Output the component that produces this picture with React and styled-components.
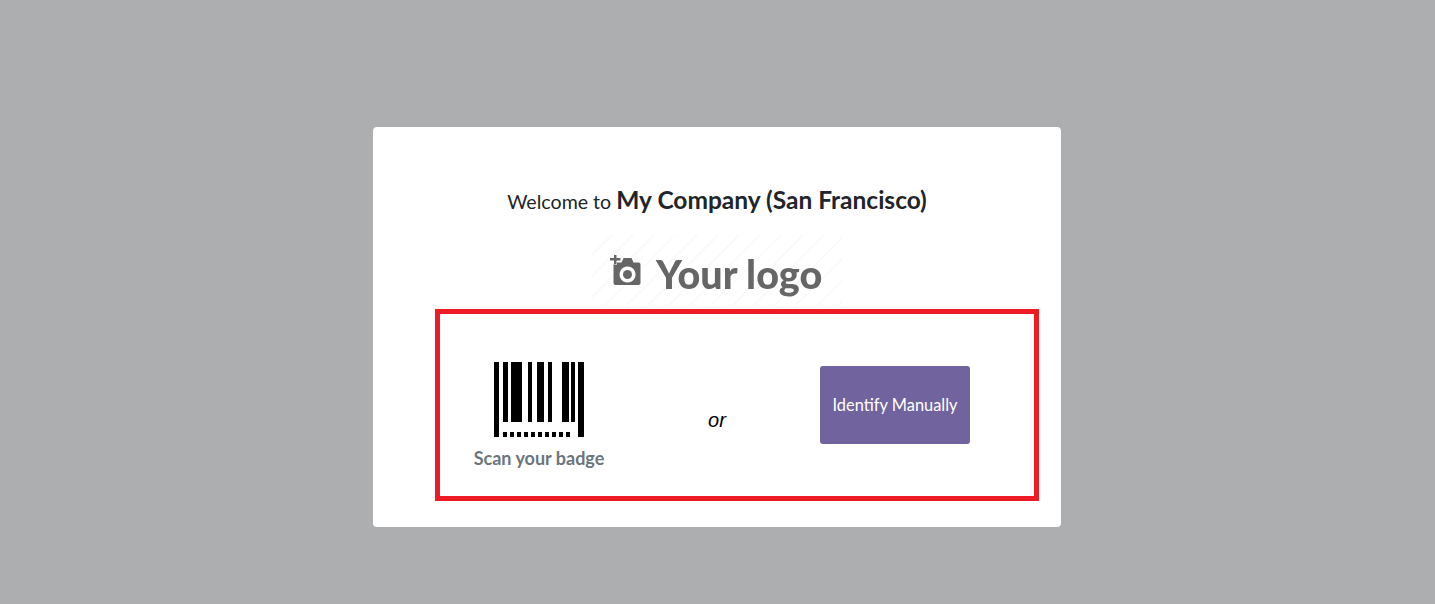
import React from 'react';
import styled, { createGlobalStyle } from 'styled-components';

const GlobalStyle = createGlobalStyle`
	html, body {
		margin: 0;
		padding: 0;
		height: 100%;
	}
	body {
		background: #adaeb0;
		font-family: Lato, "Liberation Sans", sans-serif;
	}
`;

const Page = styled.div`
	display: flex;
	justify-content: flex-start;
	align-items: flex-start;
	height: 604px;
	padding: 127px 0 0 373px;
	box-sizing: border-box;
	overflow: hidden;
`;
const Card = styled.div`
	position: relative;
	display: flex;
	flex-direction: column;
	align-items: center;
	box-sizing: border-box;
	width: 688px;
	height: 400px;
	padding-top: 57px;
	background: #fff;
	border-radius: 4px;
`;
const Title = styled.h1`
	margin: 0;
	height: 32px;
	font-size: 19.600px;
	line-height: 32px;
	font-weight: 400;
	color: #212529;
	white-space: nowrap;
`;
const Company = styled.b`
	font-size: 24.500px;
	font-weight: 700;
`;
const Logo = styled.div`
	display: flex;
	align-items: center;
	gap: 14px;
	box-sizing: border-box;
	width: 250px;
	height: 70px;
	margin-top: 19px;
	padding-left: 18px;
	color: #666;
	font-size: 39.500px;
	font-weight: 900;
	background: repeating-linear-gradient(135deg, #fff 0, #fff 13px, #f9fafa 13px, #f9fafa 15px);
`;
const LogoText = styled.span`
	position: relative;
	top: 3px;
	filter: blur(0.4px);
`;
const LogoIcon = styled.svg`
	flex: none;
	filter: blur(0.4px);
`;
const Row = styled.div`
	display: grid;
	grid-template-columns: repeat(3, 178px);
	align-items: center;
	height: 116px;
	margin-top: 57px;
`;
const Scan = styled.div`
	display: flex;
	flex-direction: column;
	align-items: center;
	align-self: flex-start;
`;
const Caption = styled.span`
	margin-top: 9px;
	font-size: 18px;
	line-height: 24px;
	font-weight: 700;
	color: #6c757d;
	white-space: nowrap;
`;
const Or = styled.i`
	text-align: center;
	font-family: "Liberation Sans", Arial, sans-serif;
	font-size: 20px;
	color: #000;
`;
const ManualButton = styled.button`
	justify-self: center;
	align-self: flex-start;
	width: 150px;
	height: 78px;
	margin-top: 4px;
	padding: 0 0 2px;
	border: 0;
	border-radius: 3px;
	background: #71639e;
	color: #fff;
	font-family: inherit;
	font-size: 16.400px;
	white-space: nowrap;
`;
const Annotation = styled.div`
	position: absolute;
	left: 62px;
	top: 182px;
	width: 604px;
	height: 192px;
	box-sizing: border-box;
	border: 5px solid #ed1c24;
	pointer-events: none;
`;

const BARS = [
	[0, 5, 75],
	[9, 5, 60],
	[17, 11, 60],
	[34, 4, 60],
	[43, 7, 60],
	[54, 4, 60],
	[68, 7, 60],
	[77, 4, 60],
	[84, 6, 75],
];
const DOTS = [9, 16, 23, 30, 37, 44, 51, 58, 65, 72];

function Barcode() {
	return (
		<svg width="90" height="75" viewBox="0 0 90 75" fill="#000">
			{BARS.map(([x, w, h]) => <rect key={x} x={x} y="0" width={w} height={h} />)}
			{DOTS.map(x => <rect key={x} x={x} y="70" width="4" height="5" />)}
		</svg>
	);
}

function CameraPlus() {
	return (
		<LogoIcon width="32" height="32" viewBox="0 0 32 32" fill="#666">
			<path fillRule="evenodd" d="M3.500 10.500c0-1.200.8-2 2-2h6l2-4.500h8l2 4.500h5c1.200 0 2 .8 2 2v18.500c0 1.200-.8 2-2 2h-23c-1.200 0-2-.8-2-2zM17.500 12.500a8 8 0 1 0 .1 0z" />
			<circle cx="17.500" cy="20.500" r="4.500" />
			<path d="M0 4h4V1h2.500v3h4v2.500h-4v4H4v-4H0z" stroke="#fff" strokeWidth="1" paintOrder="stroke" />
		</LogoIcon>
	);
}

export default function App() {
	return (
		<>
			<GlobalStyle />
			<Page>
				<Card>
					<Title>Welcome to <Company>My Company (San Francisco)</Company></Title>
					<Logo>
						<CameraPlus />
						<LogoText>Your logo</LogoText>
					</Logo>
					<Row>
						<Scan>
							<Barcode />
							<Caption>Scan your badge</Caption>
						</Scan>
						<Or>or</Or>
						<ManualButton>Identify Manually</ManualButton>
					</Row>
					<Annotation />
				</Card>
			</Page>
		</>
	);
}
